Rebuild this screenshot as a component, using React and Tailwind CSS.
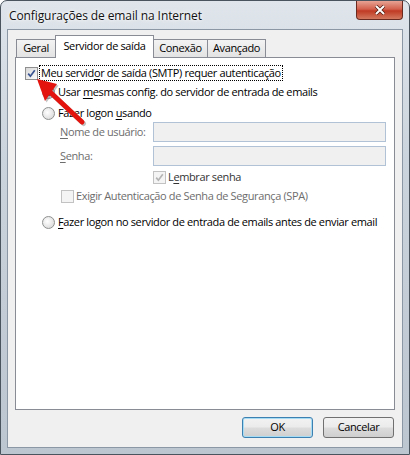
import React from 'react';

const Checkbox = ({ checked, disabled }) => (
  <span
    className={`flex h-[13px] w-[13px] shrink-0 items-center justify-center border ${
      disabled
        ? 'border-[#c2c2c2] bg-[#f4f4f4]'
        : 'border-[#8f8f8f] bg-[linear-gradient(135deg,#d8d8d8,#fbfbfb)]'
    }`}
  >
    {checked && (
      <svg viewBox="0 0 9 9" className="h-[9px] w-[9px]">
        <path
          d="M1.2 4.6 L3.4 7.2 L7.8 1.2"
          fill="none"
          stroke={disabled ? '#b4b4b4' : '#3b5593'}
          strokeWidth="1.7"
        />
      </svg>
    )}
  </span>
);

const Radio = ({ checked }) => (
  <span className="flex h-[13px] w-[13px] shrink-0 items-center justify-center rounded-full border border-[#8e8f8f] bg-[radial-gradient(circle_at_40%_40%,#ffffff,#d2d2d2)]">
    {checked && (
      <span className="h-[7px] w-[7px] rounded-full bg-[radial-gradient(circle_at_40%_35%,#5f8fc4,#10284a)]" />
    )}
  </span>
);

const TextInput = () => (
  <div className="h-[20px] w-[233px] border border-[#b2c2d6] bg-[#f0f0f0]" />
);

const App = () => {
  return (
    <div className="relative h-[455px] w-[410px] overflow-hidden rounded-t-[7px] border border-[#4a545e] bg-[linear-gradient(180deg,#dfe5eb_0%,#cbd3dc_35%,#bcc6d0_100%)] font-['Open_Sans',sans-serif] text-[11px] tracking-[-0.37px] text-black">
      {/* title bar */}
      <div className="flex h-[28px] items-start justify-between pl-[8px] pr-[6px]">
        <span className="mt-[6px] text-[12px] tracking-[-0.1px] text-[#111] [text-shadow:0_0_6px_#ffffff,0_0_3px_#ffffff]">
          Configurações de email na Internet
        </span>
        <div className="flex h-[19px] w-[47px] items-center justify-center rounded-b-[4px] border border-t-0 border-[#6b2a20] bg-[linear-gradient(180deg,#e8a394_0%,#d2614d_45%,#c03a24_55%,#d2795f_100%)]">
          <svg viewBox="0 0 12 10" className="h-[10px] w-[12px]">
            <path d="M2 1 L10 9 M10 1 L2 9" stroke="#4b1a12" strokeWidth="3.4" />
            <path d="M2 1 L10 9 M10 1 L2 9" stroke="#ffffff" strokeWidth="2" />
          </svg>
        </div>
      </div>

      {/* client area */}
      <div className="mx-[6px] h-[419px] border border-[#8b97a4] bg-[#f0f0f0] pt-[5px]">
        {/* tabs */}
        <div className="relative z-10 flex h-[22px] items-end pl-[8px]">
          <div className="flex h-[18px] w-[40px] items-center justify-center border border-b-0 border-[#898c95] bg-[linear-gradient(180deg,#f3f3f3,#e3e3e3)]">
            Geral
          </div>
          <div className="-mb-px -ml-px flex h-[23px] w-[99px] items-start justify-center border border-b-0 border-[#898c95] bg-white pt-[2px]">
            Servidor de saída
          </div>
          <div className="-ml-px flex h-[18px] w-[55px] items-center justify-center border border-b-0 border-[#898c95] bg-[linear-gradient(180deg,#f3f3f3,#e3e3e3)]">
            Conexão
          </div>
          <div className="-ml-px flex h-[18px] w-[59px] items-center justify-center border border-b-0 border-[#898c95] bg-[linear-gradient(180deg,#f3f3f3,#e3e3e3)]">
            Avançado
          </div>
        </div>

        {/* tab panel */}
        <div className="ml-[7px] flex h-[353px] w-[380px] flex-col whitespace-nowrap border border-[#898c95] bg-white pl-[9px] pt-[7px]">
          <div className="flex h-[16px] items-center">
            <Checkbox checked />
            <span className="ml-[1px] flex h-[16px] items-center border border-dotted border-black px-[1px]">
              Meu servid<u className="underline-offset-2">o</u>r de saída (SMTP) requer autenticação
            </span>
          </div>

          <div className="ml-[17px] mt-[3px] flex h-[16px] items-center">
            <Radio checked />
            <span className="ml-[3px]">
              Usar <u className="underline-offset-2">m</u>esmas config. do servidor de entrada de emails
            </span>
          </div>

          <div className="ml-[17px] mt-[5px] flex h-[16px] items-center">
            <Radio />
            <span className="ml-[3px]">
              Fazer logon <u className="underline-offset-2">u</u>sando
            </span>
          </div>

          <div className="mt-[1px] flex h-[20px] items-center">
            <span className="ml-[35px] w-[93px] text-[#6d6d6d]">
              <u className="underline-offset-2">N</u>ome de usuário:
            </span>
            <TextInput />
          </div>

          <div className="mt-[4px] flex h-[20px] items-center">
            <span className="ml-[35px] w-[93px] text-[#6d6d6d]">
              <u className="underline-offset-2">S</u>enha:
            </span>
            <TextInput />
          </div>

          <div className="ml-[128px] mt-[3px] flex h-[16px] items-center">
            <Checkbox checked disabled />
            <span className="ml-[2px] text-[#333]">
              L<u className="underline-offset-2">e</u>mbrar senha
            </span>
          </div>

          <div className="ml-[36px] mt-[3px] flex h-[16px] items-center">
            <Checkbox disabled />
            <span className="ml-[2px] text-[#6d6d6d]">
              Exi<u className="underline-offset-2">g</u>ir Autenticação de Senha de Segurança (SPA)
            </span>
          </div>

          <div className="ml-[17px] mt-[10px] flex h-[16px] items-center">
            <Radio />
            <span className="ml-[3px]">
              <u className="underline-offset-2">F</u>azer logon no servidor de entrada de emails antes de enviar email
            </span>
          </div>
        </div>

        {/* buttons */}
        <div className="mt-[7px] flex justify-end gap-[10px] pr-[8px]">
          <button className="h-[21px] w-[71px] rounded-[3px] border border-[#3c7fb1] bg-[linear-gradient(180deg,#f2f2f2_0%,#ebebeb_48%,#dcdcdc_52%,#cfcfcf_100%)] shadow-[inset_0_0_0_1px_#a7dcf5]">
            OK
          </button>
          <button className="h-[21px] w-[71px] rounded-[3px] border border-[#707070] bg-[linear-gradient(180deg,#f2f2f2_0%,#ebebeb_48%,#dcdcdc_52%,#cfcfcf_100%)]">
            Cancelar
          </button>
        </div>
      </div>

      {/* red annotation arrow */}
      <svg
        className="pointer-events-none absolute -left-px -top-px h-[455px] w-[410px]"
        viewBox="0 0 410 455"
      >
        <g opacity="0.35" transform="translate(1.5 1.5)">
          <line x1="50" y1="92" x2="82" y2="122" stroke="#555" strokeWidth="5" strokeLinecap="round" />
          <polygon points="37,79 57,84 45,101" fill="#555" />
        </g>
        <line x1="50" y1="92" x2="82" y2="122" stroke="#e3140e" strokeWidth="5" strokeLinecap="round" />
        <polygon points="37,79 57,84 45,101" fill="#e3140e" />
      </svg>
    </div>
  );
};

export default App;
